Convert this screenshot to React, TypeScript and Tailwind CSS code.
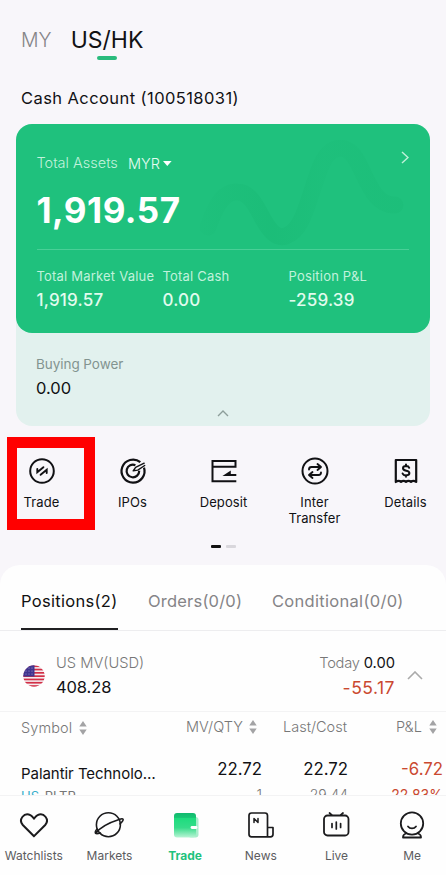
import type { ReactNode } from "react";

function Icon({ children, size = 28, className = "" }: { children: ReactNode; size?: number; className?: string }) {
  return (
    <svg width={size} height={size} viewBox={`0 0 ${size} ${size}`} fill="none" stroke="currentColor" strokeWidth="2" strokeLinecap="round" strokeLinejoin="round" className={`block shrink-0 overflow-visible ${className}`}>
      {children}
    </svg>
  );
}

function Action({ icon, label }: { icon: ReactNode; label: string }) {
  return (
    <div className="flex flex-col items-center text-[#111114]">
      {icon}
      <div className="mt-[9px] w-[70px] text-center text-[13px] leading-4 tracking-[0.1px]">{label}</div>
    </div>
  );
}

function NavItem({ icon, label, active = false }: { icon: ReactNode; label: string; active?: boolean }) {
  return (
    <div className="flex flex-col items-center pt-[15px] text-[#1b1b1d]">
      {icon}
      <div className={`mt-[9px] text-[12px] leading-4 ${active ? "font-bold text-[#1ec27d]" : "text-[#5c5c5e]"}`}>{label}</div>
    </div>
  );
}

function Sort() {
  return (
    <svg width="8" height="14" viewBox="0 0 8 14" fill="#a3a3a5" className="shrink-0">
      <path d="M4 0 7.7 5.5H.3zM4 14 .3 8.5h7.4z" />
    </svg>
  );
}

function Flag() {
  return (
    <svg width="22" height="22" viewBox="0 0 22 22" className="mt-[9px] shrink-0">
      <clipPath id="flag"><circle cx="11" cy="11" r="10.7" /></clipPath>
      <g clipPath="url(#flag)">
        <rect width="22" height="22" fill="#f4edf0" />
        {[0, 1, 2, 3, 4, 5, 6].map((i) => <rect key={i} y={0.4 + i * 3.3} width="22" height="1.7" fill="#d22f46" />)}
        <rect width="11.5" height="11.5" fill="#40348f" />
        {[2, 5, 8].map((y) => [3, 6, 9].map((x) => <circle key={`${x}-${y}`} cx={x} cy={y + 1} r=".5" fill="#b9b0dd" />))}
      </g>
    </svg>
  );
}

export default function App() {
  return (
    <div className="relative flex h-[875px] w-[446px] flex-col overflow-hidden bg-[#f8f6fa] font-['Inter','Noto_Sans',sans-serif] text-[#111114]">
      <header className="flex h-[60px] shrink-0 items-start pl-[21px] pt-6">
        <span className="w-[50px] text-[19.5px] font-light leading-8 text-[#858487]">MY</span>
        <div className="flex w-[72px] flex-col items-center">
          <span className="text-[23px] leading-8">US/HK</span>
          <span className="h-1 w-5 rounded-full bg-[#2abb7c]" />
        </div>
      </header>
      <div className="h-16 shrink-0 whitespace-nowrap pl-[21px] pt-[26px] text-[16.5px] leading-6 tracking-[0.42px]">Cash Account (100518031)</div>

      <section className="mx-4 h-[302px] shrink-0 rounded-[16px] bg-[#e2f1ee]">
        <div className="relative h-[209px] overflow-hidden rounded-[16px] bg-[#1fc17d] pl-[20.5px] pr-[21.5px] text-[#c1f2dc]">
          <svg className="absolute left-0 top-0" width="414" height="209" fill="none">
            <defs>
              <linearGradient id="wave" gradientUnits="userSpaceOnUse" x1="185" y1="0" x2="390" y2="0">
                <stop stopColor="#18b873" stopOpacity="0.1" />
                <stop offset="0.35" stopColor="#18b873" stopOpacity="0.45" />
                <stop offset="0.6" stopColor="#18b873" stopOpacity="0.15" />
                <stop offset="1" stopColor="#18b873" stopOpacity="0.3" />
              </linearGradient>
            </defs>
            <path d="M192 103C200 80 208 67 221 68c13 0 19 14 26 27 7 12 13 20 23 17 18-6 22-38 34-68 9-24 27-26 37-7 10 18 17 45 38 44" stroke="url(#wave)" strokeWidth="17" strokeLinecap="round" strokeLinejoin="round" />
          </svg>
          <div className="relative flex h-[78px] items-center text-[14.5px] font-light">
            <span className="w-[91.5px] whitespace-nowrap">Total Assets</span>
            <span className="mt-[2px] text-[#e5fcf2]">MYR</span>
            <svg width="9" height="5" className="ml-[3px]" fill="white"><path d="M0 0h8.6L4.3 5z" /></svg>
            <svg width="8" height="13" className="-mt-3 ml-auto" fill="none" stroke="#bdf0d8" strokeWidth="1.5"><path d="m1 1 6 5.5-6 5.5" /></svg>
          </div>
          <div className="relative h-[47px] text-[35px] font-bold leading-4 tracking-[0.5px] text-white">1,919.57</div>
          <div className="relative grid grid-cols-[126px_126px_1fr] border-t border-[#49cf97] pt-4">
            {[["Total Market Value", "1,919.57"], ["Total Cash", "0.00"], ["Position P&L", "-259.39"]].map(([label, value]) => (
              <div key={label} className="whitespace-nowrap">
                <div className="text-[13px] leading-5 tracking-[0.2px]">{label}</div>
                <div className="mt-[2px] text-[17px] font-medium leading-6 tracking-[0.2px] text-[#e1fbee]">{value}</div>
              </div>
            ))}
          </div>
        </div>
        <div className="flex flex-col px-[20px] pt-[21px]">
          <span className="text-[13.5px] leading-5 tracking-[-0.05px] text-[#829490]">Buying Power</span>
          <span className="mt-[2px] text-[16.5px] leading-6">0.00</span>
          <svg width="12" height="7" className="mt-[10px] self-center" fill="none" stroke="#8d9e9a" strokeWidth="1.4"><path d="m1 6 5-5 5 5" /></svg>
        </div>
      </section>

      <div className="-mx-1 grid h-[118px] w-[455px] shrink-0 grid-cols-5 pt-[31px]">
        <Action label="Trade" icon={<Icon><circle cx="14" cy="14" r="11.8" /><path d="m15.4 10.2-6.1 5V12M12.6 17.8l6.1-5V16" strokeWidth="1.9" strokeLinejoin="miter" /></Icon>} />
        <Action label="IPOs" icon={<Icon><path d="M21.3 5.2A11.5 11.5 0 1 0 25 10.6" strokeWidth="2.2" strokeLinecap="butt" /><path d="M16.4 8.2A6.3 6.3 0 1 0 20.2 13.8" strokeWidth="2.2" strokeLinecap="butt" /><path d="m14.2 13.8 2.4-3.4 8.6-4.2M14.2 13.8l4.6-.7 6.9-4.6" strokeWidth="1.4" /></Icon>} />
        <Action label="Deposit" icon={<Icon><path d="M2.5 9.8h23V4h-23v20.3h23.8M26.3 18H15.8l4-2.6V18" strokeWidth="2" strokeLinecap="butt" strokeLinejoin="miter" /></Icon>} />
        <Action label="Inter Transfer" icon={<Icon><circle cx="14" cy="14" r="12.5" /><path d="M8 12.5c0-2 1-2.5 2.5-2.5H19m-2.5-3L20 10l-3.5 3M20 15.5c0 2-1 2.5-2.5 2.5H9m2.5-3L8 18l3.5 3" strokeWidth="1.9" /></Icon>} />
        <Action label="Details" icon={<Icon><path d="M3.8 3h20.4v22c-2-1.6-3.5-1.6-5.2-.2-1.7-1.4-3.3-1.4-5 0-1.7-1.4-3.3-1.4-5 0-1.7-1.4-3.2-1.4-5.2.2z" strokeWidth="2.2" /><path d="M17.2 10.8c-.4-1.1-1.4-1.7-3.1-1.7-2 0-3.1.8-3.1 2.2 0 3.4 6.4 1.6 6.4 4.8 0 1.5-1.2 2.3-3.3 2.3-1.8 0-3-.6-3.5-1.9M14 7.6v1.6M14 18.3v1.5" /></Icon>} />
      </div>
      <div className="flex h-[21px] shrink-0 justify-center gap-[5px] pt-px">
        <span className="h-[3px] w-[10px] rounded-[1px] bg-[#111]" />
        <span className="h-[3px] w-[10px] rounded-[1px] bg-[#d9d7dc]" />
      </div>

      <main className="flex h-[230px] shrink-0 flex-col overflow-hidden rounded-t-[20px] bg-[#fefefe]">
        <div className="flex h-[66px] shrink-0 whitespace-nowrap border-b border-[#ededef] pl-[21px] text-[16.5px] tracking-[0.3px] text-[#858487]">
          <div className="h-[65px] w-[97px] border-b-2 border-[#202022] pt-6 leading-6 text-[#111]">Positions(2)</div>
          <div className="ml-[30px] w-[94px] pt-6 leading-6 tracking-[0.2px]">Orders(0/0)</div>
          <div className="ml-[30px] pt-6 leading-6">Conditional(0/0)</div>
        </div>
        <div className="flex h-[81px] shrink-0 items-center border-b border-[#f3f3f4] pl-[23px] pr-[23px]">
          <Flag />
          <div className="ml-[11px] pt-2">
            <div className="text-[14.7px] font-light leading-6 text-[#777]">US MV(USD)</div>
            <div className="text-[16.5px] leading-6 tracking-[-0.1px]">408.28</div>
          </div>
          <div className="ml-auto pt-2 text-right">
            <div className="text-[14.7px] leading-6"><span className="font-light tracking-[-0.3px] text-[#777]">Today</span> 0.00</div>
            <div className="pt-px text-[17.5px] leading-6 tracking-[0.5px] text-[#ca4930]">-55.17</div>
          </div>
          <svg width="16" height="9" className="ml-3 mt-[9px]" fill="none" stroke="#aaa" strokeWidth="1.6"><path d="m1 8 7-7 7 7" /></svg>
        </div>
        <div className="flex h-8 shrink-0 items-center whitespace-nowrap pl-[21px] pr-[9px] text-[14.5px] font-light text-[#777]">
          <div className="flex w-[165px] items-center gap-[7px] tracking-[0.1px]">Symbol <Sort /></div>
          <div className="flex w-[97px] items-center gap-[6px] pb-[2px]">MV/QTY <Sort /></div>
          <div className="w-[113px] pb-[2px]">Last/Cost</div>
          <div className="flex items-center gap-[7px] pb-[2px]">P&amp;L <Sort /></div>
        </div>
        <div className="grid grid-cols-[160px_81px_86px_1fr] whitespace-nowrap pl-[21px] pr-[3px] pt-[13px] text-right text-[16.8px]">
          <div className="pt-[5px] text-left">
            <div className="text-[15px] leading-6 tracking-[-0.05px]">Palantir Technolo…</div>
            <div className="text-[13px] leading-5 text-[#777]"><span className="mr-[2px] text-[#35aecb]">US</span> PLTR</div>
          </div>
          <div><div className="leading-6">22.72</div><div className="pt-[2px] text-[14px] font-light leading-6 text-[#777]">1</div></div>
          <div><div className="leading-6">22.72</div><div className="pt-[2px] text-[14px] font-light leading-6 text-[#777]">29.44</div></div>
          <div className="text-[#ca4930]"><div className="leading-6">-6.72</div><div className="pt-[2px] text-[14px] leading-6">22.83%</div></div>
        </div>
      </main>

      <nav className="-mx-1 grid h-20 w-[454px] shrink-0 grid-cols-6 border-t border-[#f3f3f4] bg-[#fefefe]">
        <NavItem label="Watchlists" icon={<Icon><path d="M14 25.2 2.8 14C-2 8.5 4.3.8 10.4 4.1 11.8 4.8 13 6.3 14 7.5c1-1.2 2.2-2.7 3.6-3.4C23.7.8 30 8.5 25.2 14z" strokeLinejoin="miter" /></Icon>} />
        <NavItem label="Markets" icon={<Icon><circle cx="13.4" cy="13.7" r="12" strokeWidth="1.6" /><path d="M1.8 18.2C.2 20 0 21.8.6 22.3c.8.6 2.8.3 4.8-.3M.6 22.3C6 15 16 11 24.8 8.2c1.6-.4 3-.5 3.3.1.4 1-1.3 3-3.1 4.6" strokeWidth="1.6" /></Icon>} />
        <NavItem active label="Trade" icon={<Icon><defs><linearGradient id="wallet" x1="0" y1="0" x2="0" y2="1"><stop stopColor="#12b96e" /><stop offset=".18" stopColor="#17c574" /><stop offset=".22" stopColor="#1edc7e" /><stop offset=".6" stopColor="#36dc8a" /><stop offset="1" stopColor="#b9f4d5" /></linearGradient></defs><rect x="17" y="6" width="10.5" height="20.5" rx="3" fill="#a8edcb" stroke="none" /><rect x="3" y="2" width="22" height="24.5" rx="3" fill="url(#wallet)" stroke="none" /><path d="M21 16.5h4" stroke="white" strokeWidth="2.8" /></Icon>} />
        <NavItem label="News" icon={<Icon><path d="M20.5 25.8V4.5c0-1.7-.8-2.5-2.5-2.5H4.5C2.8 2 2 2.8 2 4.5v18.8c0 1.7.8 2.5 2.5 2.5h19c1.7 0 2.5-.8 2.5-2.5v-6.8h-5.5" strokeWidth="1.7" /><path d="M7 11.5v-4l4 4v-4" strokeWidth="1.5" /></Icon>} />
        <NavItem label="Live" icon={<Icon><rect x="2" y="4.5" width="24.5" height="20" rx="3.5" strokeWidth="1.8" /><path d="M7.5 2l2.2 2M21 2l-2.2 2M10 12.5v4M14.3 11v7M18.6 12.5v4" strokeWidth="1.7" /></Icon>} />
        <NavItem label="Me" icon={<Icon><circle cx="14" cy="12.5" r="11.2" strokeWidth="1.8" /><path d="M10 15.5c2 2.5 6 2.5 8 0M8 22.5c-2 .5-3 2-3 4h18c0-2-1-3.5-3-4" strokeWidth="1.8" /></Icon>} />
      </nav>
      <div className="absolute left-[7px] top-[437px] h-[93px] w-[88px] border-y-[11px] border-l-[10px] border-r-[11px] border-[#ff0000]" />
    </div>
  );
}
